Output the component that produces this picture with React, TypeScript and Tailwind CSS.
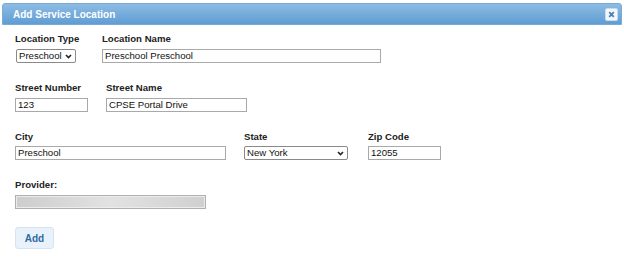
import React from "react"

const font = { fontFamily: '"Liberation Sans", Arial, sans-serif' }

function Label({ children }: { children: React.ReactNode }) {
  return <div className="h-[11px] text-[9.6px] font-bold leading-[11px] text-[#222]">{children}</div>
}

function TextBox({ value, w }: { value: string; w: string }) {
  return (
    <div className={`h-[14px] ${w} border border-[#a9a9a9] bg-white px-[2px] text-[9.6px] leading-[12px] text-[#111]`}>
      {value}
    </div>
  )
}

function Chevron() {
  return (
    <svg width="7" height="5" viewBox="0 0 7 5" className="ml-auto mr-[3px]">
      <path d="M1 1 L3.5 3.5 L6 1" stroke="#222" strokeWidth="1.6" fill="none" />
    </svg>
  )
}

function SelectBox({ value, w }: { value: string; w: string }) {
  return (
    <div className={`flex h-[14px] ${w} items-center rounded-[2px] border border-[#8a8a8a] bg-white pl-[2px] text-[9.6px] leading-[12px] text-[#111]`}>
      <span>{value}</span>
      <Chevron />
    </div>
  )
}

export default function App() {
  return (
    <div className="h-[258px] w-[624px] overflow-hidden bg-white" style={font}>
      <div className="ml-[2px] mt-[3px] flex h-[22px] w-[620px] items-center rounded-t-[3px] border border-[#7aaad6] bg-gradient-to-b from-[#8dbce4] to-[#5f9dd3] pl-[10px] pr-[3px]">
        <span className="text-[10px] font-bold text-white">Add Service Location</span>
        <div className="ml-auto flex h-[13px] w-[13px] items-center justify-center rounded-[2px] border border-[#c9dcee] bg-[#f2f7fc]">
          <svg width="7" height="7" viewBox="0 0 7 7">
            <path d="M1.2 1.2 L5.8 5.8 M5.8 1.2 L1.2 5.8" stroke="#4a7fb3" strokeWidth="1.8" />
          </svg>
        </div>
      </div>

      <div className="pl-[15px] pt-[8px]">
        <div className="flex">
          <div className="w-[87px]">
            <Label>Location Type</Label>
            <div className="mt-[5px] pl-[1px]">
              <SelectBox value="Preschool" w="w-[60px]" />
            </div>
          </div>
          <div>
            <Label>Location Name</Label>
            <div className="mt-[5px]">
              <TextBox value="Preschool Preschool" w="w-[279px]" />
            </div>
          </div>
        </div>

        <div className="mt-[19px] flex">
          <div className="w-[91px]">
            <Label>Street Number</Label>
            <div className="mt-[5px]">
              <TextBox value="123" w="w-[73px]" />
            </div>
          </div>
          <div>
            <Label>Street Name</Label>
            <div className="mt-[5px]">
              <TextBox value="CPSE Portal Drive" w="w-[141px]" />
            </div>
          </div>
        </div>

        <div className="mt-[19px] flex">
          <div className="w-[229px]">
            <Label>City</Label>
            <div className="mt-[4px]">
              <TextBox value="Preschool" w="w-[211px]" />
            </div>
          </div>
          <div className="w-[124px]">
            <Label>State</Label>
            <div className="mt-[4px]">
              <SelectBox value="New York" w="w-[104px]" />
            </div>
          </div>
          <div>
            <Label>Zip Code</Label>
            <div className="mt-[4px]">
              <TextBox value="12055" w="w-[73px]" />
            </div>
          </div>
        </div>

        <div className="mt-[19px]">
          <Label>Provider:</Label>
          <div className="mt-[5px] h-[14px] w-[191px] border border-[#b0b0b0] bg-gradient-to-r from-[#cdcdcd] via-[#e2e2e2] to-[#d0d0d0] shadow-[inset_0_0_0_1px_#ececec]" />
        </div>

        <button className="mt-[18px] h-[22px] w-[39px] rounded-[3px] border border-[#d6e4f1] bg-[#e9f2fb] text-[10px] font-bold text-[#2e6ba3]">
          Add
        </button>
      </div>
    </div>
  )
}
